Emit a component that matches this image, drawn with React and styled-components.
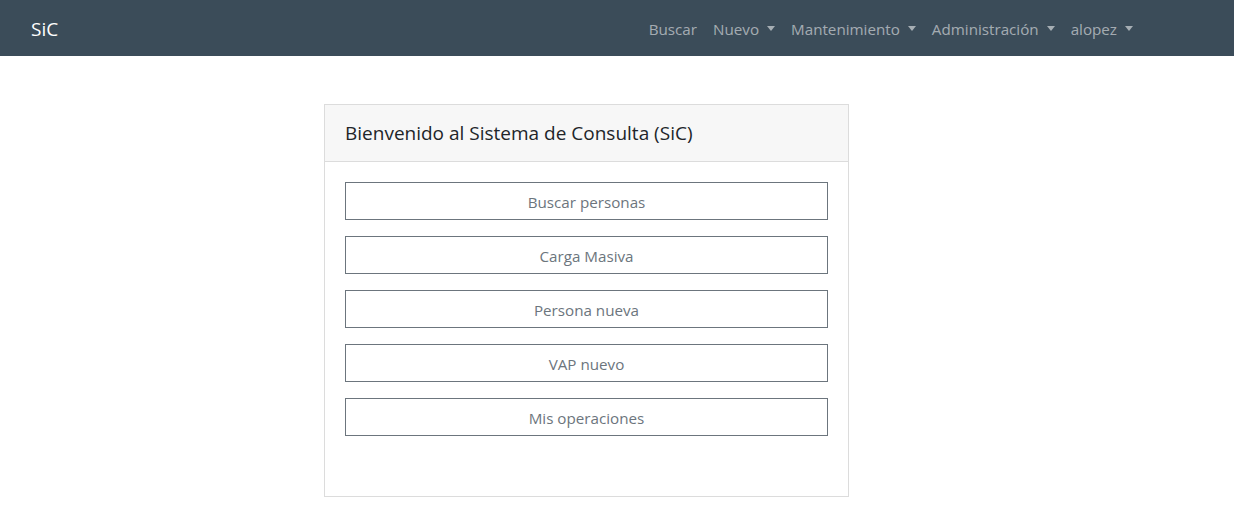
import React from 'react';
import styled, { createGlobalStyle } from 'styled-components';

const GlobalStyle = createGlobalStyle`
  body {
    margin: 0;
    font-family: "Open Sans", "Noto Sans", sans-serif;
    color: #212529;
    background: #fff;
  }
  * { box-sizing: border-box; }
`;

const Navbar = styled.nav`
  height: 56px;
  background: #3b4c59;
  display: flex;
  align-items: center;
  padding: 2px 101px 0 31px;
`;

const Brand = styled.a`
  color: #fff;
  font-size: 19px;
  text-decoration: none;
  margin-right: auto;
`;

const NavList = styled.ul`
  display: flex;
  list-style: none;
  margin: 0;
  padding: 0;
  gap: 16px;
`;

const NavLink = styled.a`
  color: rgba(255, 255, 255, 0.55);
  font-size: 15.2px;
  text-decoration: none;
  display: flex;
  align-items: center;

  ${(p) =>
    p.$dropdown &&
    `
    &::after {
      content: '';
      display: inline-block;
      margin-left: 8px;
      border-top: 5px solid;
      border-left: 4px solid transparent;
      border-right: 4px solid transparent;
      position: relative;
      top: -1px;
    }
  `}
`;

const Main = styled.main`
  padding: 48px 0 16px 324px;
`;

const Card = styled.section`
  width: 525px;
  border: 1px solid #dcdcdc;
`;

const CardHeader = styled.div`
  height: 57px;
  background: #f7f7f7;
  border-bottom: 1px solid #dcdcdc;
  display: flex;
  align-items: center;
  padding: 0 20px;
  font-size: 19px;
  color: #212529;
`;

const CardBody = styled.div`
  padding: 20px 20px 60px;
  display: flex;
  flex-direction: column;
  gap: 16px;
`;

const OutlineButton = styled.button`
  height: 38px;
  width: 100%;
  padding-top: 2px;
  background: #fff;
  border: 1px solid #6c757d;
  border-radius: 0;
  color: #6c757d;
  font-family: inherit;
  font-size: 15.2px;
  cursor: pointer;
`;

const navItems = [
  { label: 'Buscar' },
  { label: 'Nuevo', dropdown: true },
  { label: 'Mantenimiento', dropdown: true },
  { label: 'Administración', dropdown: true },
  { label: 'alopez', dropdown: true },
];

const actions = ['Buscar personas', 'Carga Masiva', 'Persona nueva', 'VAP nuevo', 'Mis operaciones'];

export default function App() {
  return (
    <>
      <GlobalStyle />
      <Navbar>
        <Brand href="#">SiC</Brand>
        <NavList>
          {navItems.map((item) => (
            <li key={item.label}>
              <NavLink href="#" $dropdown={item.dropdown}>{item.label}</NavLink>
            </li>
          ))}
        </NavList>
      </Navbar>
      <Main>
        <Card>
          <CardHeader>Bienvenido al Sistema de Consulta (SiC)</CardHeader>
          <CardBody>
            {actions.map((a) => (
              <OutlineButton key={a}>{a}</OutlineButton>
            ))}
          </CardBody>
        </Card>
      </Main>
    </>
  );
}
